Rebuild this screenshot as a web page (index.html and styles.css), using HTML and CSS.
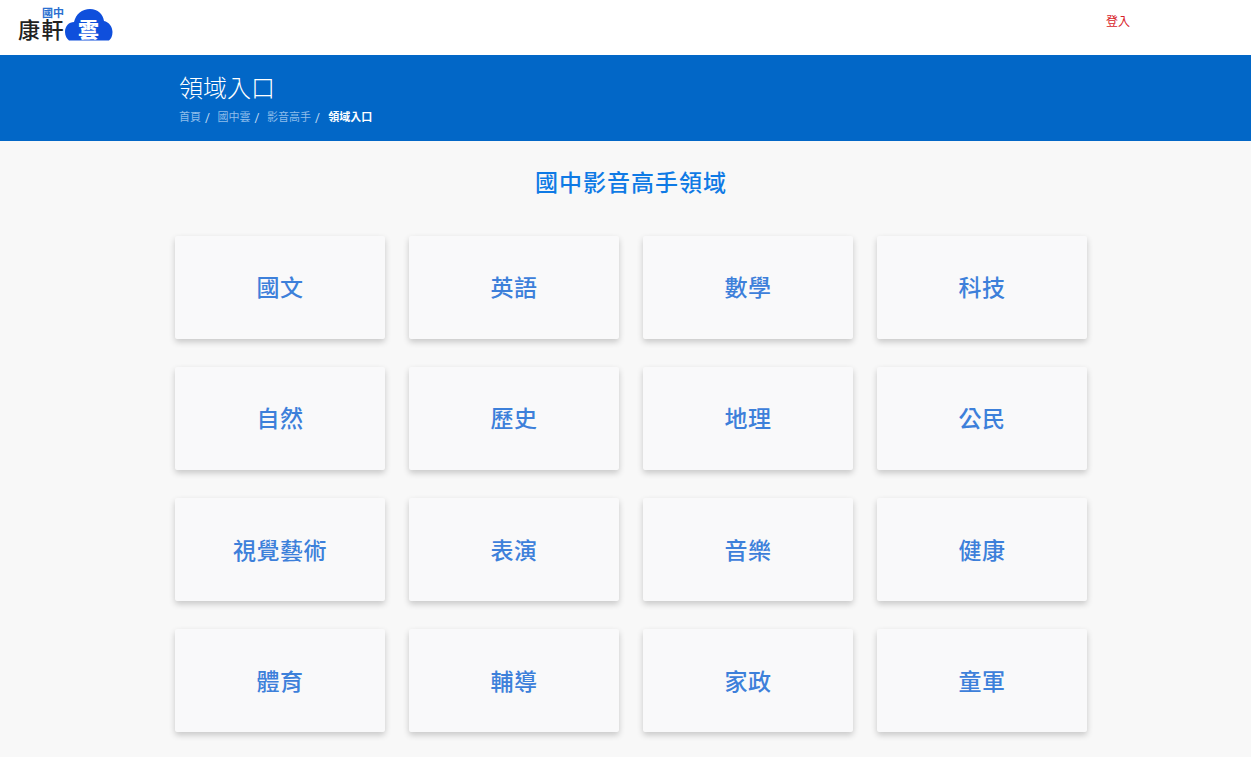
FILE: index.html
```html
<!DOCTYPE html>
<html lang="zh-Hant">
<head>
<meta charset="utf-8">
<title>領域入口</title>
<link rel="stylesheet" href="styles.css">
</head>
<body>
<header class="topbar">
  <a class="logo">
    <span class="logo-words">
      <span class="logo-small">國中</span>
      <span class="logo-big">康軒</span>
    </span>
    <span class="logo-cloud">
      <svg class="cloud-svg" width="48" height="33" viewBox="0 0 48 33"><path d="M0 24C0 18 4 14 9 14C11 6 17 1 25 1C33 1 38 6 39 13C44 14 47.500 19 47.500 24C47.500 28 46 31 44 32.500H4C2 31 0 28 0 24Z" fill="#0f4fdc"/></svg>
      <span class="cloud-text">雲</span>
    </span>
  </a>
  <a class="login">登入</a>
</header>
<section class="banner">
  <h1 class="banner-title">領域入口</h1>
  <nav class="crumbs">
    <span class="crumb">首頁</span><span class="sep">/</span>
    <span class="crumb">國中雲</span><span class="sep">/</span>
    <span class="crumb">影音高手</span><span class="sep">/</span>
    <span class="crumb-current">領域入口</span>
  </nav>
</section>
<main class="content">
  <h2 class="heading">國中影音高手領域</h2>
  <div class="grid">
    <a class="card">國文</a><a class="card">英語</a><a class="card">數學</a><a class="card">科技</a>
    <a class="card">自然</a><a class="card">歷史</a><a class="card">地理</a><a class="card">公民</a>
    <a class="card">視覺藝術</a><a class="card">表演</a><a class="card">音樂</a><a class="card">健康</a>
    <a class="card">體育</a><a class="card">輔導</a><a class="card">家政</a><a class="card">童軍</a>
  </div>
</main>
</body>
</html>
```
FILE: styles.css
```css
* { box-sizing: border-box; }
html, body { margin: 0; height: 757px; overflow: hidden; }
body {
  background: #f8f8f8;
  font-family: Roboto, "Noto Sans CJK TC", sans-serif;
}
.topbar {
  height: 55px;
  background: #fff;
  display: flex;
  justify-content: space-between;
  padding: 8px 121px 0 17px;
}
.logo { display: flex; align-items: flex-start; }
.logo-words { display: flex; flex-direction: column; align-items: flex-end; width: 48px; }
.logo-small { font-size: 11px; line-height: 11px; color: #2a6fd0; font-weight: 700; margin-right: 1px; }
.logo-big { font-size: 22px; line-height: 24px; font-weight: 500; letter-spacing: 1.5px; color: #222; white-space: nowrap; }
.logo-cloud { position: relative; width: 48px; height: 33px; display: block; }
.cloud-svg { display: block; }
.cloud-text {
  position: absolute;
  left: 13px;
  top: 11px;
  font-size: 21px;
  line-height: 22px;
  font-weight: 900;
  color: #fff;
}
.login { font-size: 12px; line-height: 14px; color: #d8232a; margin-top: 7px; }
.banner {
  height: 86px;
  background: #0267c7;
  padding: 19px 0 0 179px;
}
.banner-title {
  margin: 0;
  font-size: 24px;
  line-height: 30px;
  font-weight: 300;
  color: #fff;
}
.crumbs {
  display: flex;
  align-items: center;
  margin-top: 6px;
  font-size: 11px;
  line-height: 16px;
  color: #8fbdea;
}
.sep { margin: 0 7.5px 0 4px; color: #c5dcf3; font-size: 12px; }
.crumb-current { color: #fff; font-weight: 700; margin-left: 1px; }
.content { padding: 0 0 0 175px; }
.heading {
  margin: 0;
  width: 912px;
  padding-top: 27px;
  height: 95px;
  text-align: center;
  font-size: 23px;
  line-height: 32px;
  font-weight: 500;
  letter-spacing: 1px;
  color: #0f7ae5;
}
.grid {
  display: grid;
  grid-template-columns: repeat(4, 210px);
  grid-auto-rows: 103px;
  column-gap: 24px;
  row-gap: 28.15px;
}
.card {
  display: flex;
  align-items: center;
  justify-content: center;
  padding-top: 3.5px;
  background: #f9f9fa;
  border-radius: 2px;
  box-shadow: 0 3px 6px rgba(0, 0, 0, 0.2);
  font-size: 23px;
  line-height: 32px;
  font-weight: 500;
  letter-spacing: 0.5px;
  color: #3d80da;
}
```
